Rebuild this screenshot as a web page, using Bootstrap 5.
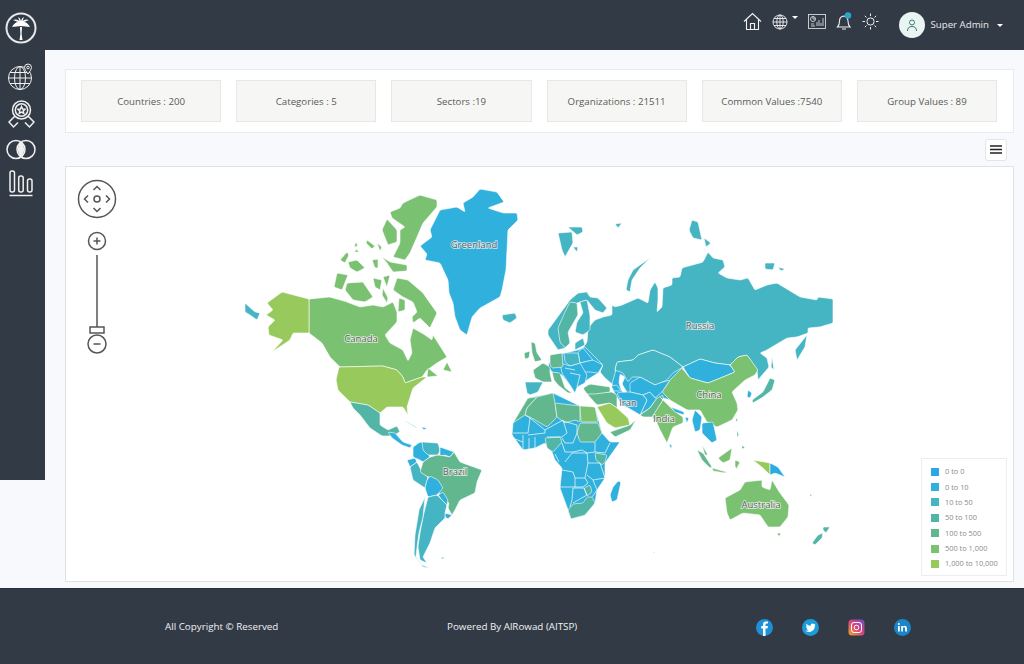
<!DOCTYPE html>
<html lang="en">
<head>
    <meta charset="UTF-8">
    <meta name="viewport" content="width=device-width, initial-scale=1.0">
    <title>Dashboard - World Map</title>
    <link href="https://cdn.jsdelivr.net/npm/bootstrap@5.3.2/dist/css/bootstrap.min.css" rel="stylesheet">
    <style>
        body {
            background: #f7f9fc;
            color: #555;
            font-family: "Open Sans", "Noto Sans", sans-serif;
            font-size: 9.7px;
            height: 664px;
            overflow: hidden;
        }
        .app-top {
            background: #323a46;
            height: 50px;
            padding: 0 21px 0 5px;
        }
        .app-logo { margin-top: 5px; }
        .top-icons { gap: 10px; margin-right: 12px; margin-bottom: 7px; }
        .user-name { color: #e8eaec; font-size: 9.7px; }
        .user-avatar {
            background: #e9f5f3;
            width: 26px;
            height: 26px;
            margin-right: 5px;
        }
        .caret-mini {
            border-left: 3px solid transparent;
            border-right: 3px solid transparent;
            border-top: 3px solid #fff;
            display: inline-block;
        }
        .app-middle { height: 538px; }
        .app-side {
            background: #323a46;
            width: 45px;
            height: 430px;
            padding: 13px 3px 0 0;
            gap: 10px;
        }
        .app-main {
            padding: 19px 10px 6px 20px;
            min-width: 0;
        }
        .stats-box {
            border: 1px solid #e9ecef;
            border-radius: 0;
            height: 64px;
            padding: 10px 16px 10px 15px;
            column-gap: 15px;
        }
        .stat-tile {
            background: #f6f7f5;
            border: 1px solid #e6e8e6;
            flex: 1 1 0;
            color: #5a5a5a;
            padding-top: 3px;
        }
        .map-tools { height: 33px; padding-right: 7px; }
        .menu-btn {
            background: #fff;
            border: 1px solid #e4e6ea;
            border-radius: 3px;
            width: 22px;
            height: 22px;
            padding: 0;
        }
        .map-box {
            border: 1px solid #dfe2e6;
            border-radius: 0;
            height: 416px;
            overflow: hidden;
        }
        .map-canvas { width: 100%; height: 100%; display: block; }
        .map-canvas polygon, .map-canvas path { stroke: #fff; stroke-width: .6; stroke-linejoin: round; }
        .map-canvas polyline { stroke: #fff; stroke-width: .7; fill: none; }
        .map-canvas text {
            fill: #5c5c5c;
            font-family: "Open Sans", sans-serif;
            font-size: 9.5px;
            text-anchor: middle;
            paint-order: stroke;
            stroke: rgba(255, 255, 255, .75);
            stroke-width: 1.6px;
        }
        .c0 { fill: #2aabe2; }
        .c1 { fill: #30b0dc; }
        .c2 { fill: #45b5c3; }
        .c3 { fill: #52b5a6; }
        .c4 { fill: #62b78f; }
        .c5 { fill: #7bc172; }
        .c6 { fill: #97c95c; }
        .cw { fill: #fff; }
        .map-nav { position: absolute; left: 11px; top: 12px; }
        .map-legend {
            position: absolute;
            right: 6px;
            bottom: 5px;
            width: 86px;
            height: 118px;
            background: #fff;
            border: 1px solid #eceef0;
            padding: 5px 0 0 9px;
            color: #8b8b8b;
            font-size: 7.4px;
        }
        .legend-row { height: 15.4px; gap: 6px; }
        .legend-dot { width: 8px; height: 8px; }
        .app-foot {
            background: #323a46;
            border-top: 1px solid #2a303a;
            height: 76px;
            padding-top: 2px;
            color: #f1f2f3;
            font-size: 9.8px;
        }
        .foot-copy { margin-left: 165px; width: 282px; }
        .foot-power { width: 309px; }
        .foot-social { gap: 29px; }
    </style>
</head>
<body>
    <nav class="app-top d-flex align-items-center justify-content-between">
        <!-- logo -->
        <svg class="app-logo" width="32" height="32" viewBox="0 0 32 32" fill="none">
            <circle cx="16" cy="16" r="14.500" stroke="#e8e8e8" stroke-width="2"/>
            <path d="M15 15 Q16 22 14.500 28 H17.500 Q16 22 17 15Z" fill="#fff"/>
            <path d="M16 14 L7 15 Q10 10 13 10 L8 8 Q12 6.500 14.500 9 L13 5 Q15.500 6 16 9 Q16.500 6 19 5 L17.500 9 Q20 6.500 24 8 L19 10 Q22 10 25 15Z" fill="#fff"/>
        </svg>
        <div class="d-flex align-items-center">
            <div class="top-icons d-flex align-items-center">
                <svg width="19" height="19" viewBox="0 0 19 19" fill="none" stroke="#f2f2f2" stroke-width="1.100">
                    <path d="M1 9.500 L9.500 1.500 L18 9.500 M3.500 7.500 V17.500 H15.500 V7.500 M7.500 17.500 V11.500 H11.500 V17.500"/>
                </svg>
                <span class="d-flex align-items-center gap-1">
                    <svg width="16" height="16" viewBox="0 0 16 16" fill="none" stroke="#f2f2f2" stroke-width=".9">
                        <circle cx="8" cy="8" r="7"/><ellipse cx="8" cy="8" rx="3.200" ry="7"/>
                        <path d="M1 8 H15 M2 4.500 H14 M2 11.500 H14 M8 1 V15"/>
                    </svg>
                    <span class="caret-mini mb-2"></span>
                </span>
                <svg width="18" height="15" viewBox="0 0 18 15" fill="none" stroke="#d8dadc" stroke-width=".9">
                    <rect x=".5" y=".5" width="17" height="14"/>
                    <circle cx="5" cy="5" r="2.500"/><path d="M5 2.500 V5 H7.500"/>
                    <path d="M9 12 V8 M11 12 V6 M13 12 V9 M15 12 V4 M3 12 H7 M3 10 H6"/>
                </svg>
                <svg width="16" height="19" viewBox="0 0 16 19" fill="none" stroke="#f2f2f2" stroke-width="1.100">
                    <path d="M1.500 15 Q3.500 13 3.500 9 Q3.500 4.500 8 4 Q11.500 4.500 12 9 Q12 13 14 15Z M6 17 H10"/>
                    <circle cx="12" cy="3.500" r="3.200" fill="#2aa5cf" stroke="none"/>
                </svg>
                <svg width="17" height="17" viewBox="0 0 17 17" fill="none" stroke="#f2f2f2" stroke-width="1">
                    <circle cx="8.500" cy="8.500" r="3.600"/>
                    <path d="M8.500 .5 V3 M8.500 14 V16.500 M.5 8.500 H3 M14 8.500 H16.500 M2.800 2.800 L4.500 4.500 M12.500 12.500 L14.200 14.200 M2.800 14.200 L4.500 12.500 M12.500 4.500 L14.200 2.800"/>
                </svg>
            </div>
            <div class="d-flex align-items-center">
                <span class="user-avatar rounded-circle d-flex align-items-center justify-content-center ms-2">
                    <svg width="12" height="13" viewBox="0 0 12 13" fill="none" stroke="#3d7a66" stroke-width="1">
                        <circle cx="6" cy="3.500" r="2.500"/><path d="M1.500 12 Q1.500 7.500 6 7.500 Q10.500 7.500 10.500 12"/>
                    </svg>
                </span>
                <span class="user-name">Super Admin</span>
                <span class="caret-mini ms-2"></span>
            </div>
        </div>
    </nav>

    <div class="app-middle d-flex">
        <aside class="app-side d-flex flex-column align-items-center flex-shrink-0">
            <svg width="27" height="27" viewBox="0 0 27 27" fill="none" stroke="#f0f0f0" stroke-width="1">
                <circle cx="12" cy="15" r="11.500"/><ellipse cx="12" cy="15" rx="5.500" ry="11.500"/>
                <path d="M.5 15 H23.500 M2 9.500 H22 M2 20.500 H22 M12 3.500 V26.500"/>
                <path d="M20 1 Q16.500 1 16.500 4.500 Q16.500 7 20 11 Q23.500 7 23.500 4.500 Q23.500 1 20 1Z" fill="#323a46"/>
                <circle cx="20" cy="4.500" r="1.300"/>
            </svg>
            <svg width="27" height="29" viewBox="0 0 27 29" fill="none" stroke="#f0f0f0" stroke-width="1.500">
                <circle cx="13.500" cy="10" r="9"/><circle cx="13.500" cy="10" r="6.200"/>
                <path d="M13.500 6.500 L14.600 9 L17 9.300 L15.200 11 L15.700 13.400 L13.500 12.200 L11.300 13.400 L11.800 11 L10 9.300 L12.400 9 Z"/>
                <path d="M7 16 L1 22 L5.500 27 L10 22.500 M20 16 L26 22 L21.500 27 L17 22.500"/>
            </svg>
            <svg width="30" height="21" viewBox="0 0 30 21" fill="none" stroke="#f0f0f0" stroke-width="1.500">
                <circle cx="10" cy="10.500" r="9"/><circle cx="20" cy="10.500" r="9"/>
                <path d="M15 3 Q20 10.500 15 18 Q10 10.500 15 3Z" fill="#f0f0f0"/>
            </svg>
            <svg width="24" height="27" viewBox="0 0 24 27" fill="none" stroke="#f0f0f0" stroke-width="1.500">
                <rect x="1" y="1" width="4.500" height="21" rx="2"/>
                <rect x="9.700" y="6" width="4.500" height="16" rx="2"/>
                <rect x="18.500" y="9" width="4.500" height="13" rx="2"/>
                <path d="M.5 25.500 H23.500"/>
            </svg>
        </aside>

        <main class="app-main flex-grow-1">
            <div class="stats-box card flex-row">
                <div class="stat-tile d-flex align-items-center justify-content-center">Countries : 200</div>
                <div class="stat-tile d-flex align-items-center justify-content-center">Categories : 5</div>
                <div class="stat-tile d-flex align-items-center justify-content-center">Sectors :19</div>
                <div class="stat-tile d-flex align-items-center justify-content-center">Organizations : 21511</div>
                <div class="stat-tile d-flex align-items-center justify-content-center">Common Values :7540</div>
                <div class="stat-tile d-flex align-items-center justify-content-center">Group Values : 89</div>
            </div>

            <div class="map-tools d-flex align-items-center justify-content-end">
                <button class="menu-btn btn d-flex align-items-center justify-content-center" type="button" aria-label="Menu">
                    <svg width="12" height="9" viewBox="0 0 12 9" stroke="#222" stroke-width="1.300"><path d="M0 1 H12 M0 4.500 H12 M0 8 H12"/></svg>
                </button>
            </div>

            <div class="map-box card position-relative">
                <svg class="map-canvas" id="worldMap" viewBox="66 167 947 414">
                    <!-- north america -->
                    <polygon class="c1" points="480,189 497,192 504,202 488,208 503,213 517,213 518,220 508,230 507,250 506,270 502,290 500,297 480,308 472,317 467,335 460,330 455,317 453,303 449,293 448,280 440,263 425,260 427,254 420,246 432,237 430,230 440,210 457,207 465,212 463,203 473,197"/>
                    <polygon class="c2" points="502,315 515,313 517,318 510,323 503,320"/>
                    <g class="c5">
                        <polygon points="403,203 420,195 437,200 437,207 423,223 417,237 410,253 405,260 393,257 400,243 400,230 405,227 392,218 390,212 400,208"/>
                        <polygon points="387,219 397,230 397,242 388,245 382,230"/>
                        <polygon points="340,260 347,252 349,255 345,263"/>
                        <polygon points="348,262 357,260 365,268 357,272 350,268"/>
                        <polygon points="372,260 378,259 378,268 375,268"/>
                        <polygon points="382,257 390,262 407,265 407,271 393,272 387,263"/>
                        <polygon points="367,240 375,246 372,249 366,243"/>
                        <polygon points="377,243 382,247 380,251"/>
                        <polygon points="356,242 358,246 354,247"/>
                        <polygon points="357,249 359,252 354,252"/>
                        <polygon points="337,273 348,275 342,290 334,287"/>
                        <polygon points="347,283 363,282 373,297 365,302 353,300 345,290"/>
                        <polygon points="373,278 382,280 380,290 375,287"/>
                        <polygon points="383,277 390,275 387,287"/>
                        <polygon points="397,278 408,280 423,293 437,313 430,328 420,318 413,323 412,317 417,312 413,302 403,297 393,290"/>
                        <polygon points="383,288 388,298 387,303 382,295"/>
                        <polygon points="399,298 405,300 405,310 398,312"/>
                        <polygon points="309,299 330,297 347,302 360,307 373,305 383,307 393,302 397,312 397,322 385,335 390,343 403,350 408,361 412,353 410,340 413,328 425,335 432,340 433,335 447,357 437,363 427,370 422,377 405,383 403,377 397,370 383,366 340,367 330,357 322,343 309,333"/>
                        <polygon points="447,362 452,372 443,370"/>
                        <polygon points="428,368 438,376 427,377"/>
                    </g>
                    <g class="c6">
                        <polygon points="282,292 309,299 309,333 293,333 290,340 272,352 283,340 269,335 268,327 275,320 266,315 273,310 267,303"/>
                        <polygon points="339,367 383,366 397,370 403,377 405,383 422,377 427,377 413,388 407,407 408,415 403,407 387,407 380,413 368,405 350,402 338,390 336,380"/>
                    </g>
                    <polygon class="c2" points="245,303 255,312 260,313 257,320 250,315 245,312"/>
                    <polygon class="c3" points="350,402 368,405 380,413 380,425 388,430 397,426 400,432 392,436 382,436 370,428 360,415 353,408"/>
                    <polygon class="c1" points="388,432 395,433 403,442 412,445 410,448 402,445 392,438"/>
                    <polygon class="c1" points="405,421 415,426 417,428 408,423"/>
                    <polygon class="c1" points="421,427 427,428 424,430"/>

                    <!-- south america -->
                    <polygon class="c1" points="420,442 425,443 423,450 428,453 430,457 423,462 420,460 413,457 413,447"/>
                    <polygon class="c2" points="422,442 438,443 440,450 438,455 428,455 423,450"/>
                    <polygon class="c1" points="440,447 454,452 450,457 445,455 440,456"/>
                    <polygon class="c1" points="407,460 415,458 417,462 410,467"/>
                    <polygon class="c2" points="410,467 417,462 422,472 428,477 425,488 413,480"/>
                    <polygon class="c4" points="438,455 445,456 450,457 454,452 460,462 482,470 477,482 475,493 460,500 455,510 452,515 448,508 449,503 443,497 438,492 440,487 432,478 428,477 420,472 423,462 430,457"/>
                    <polygon class="c1" points="425,488 427,480 430,476 438,480 443,488 437,495 428,497"/>
                    <polygon class="c1" points="438,495 443,492 448,500 447,505 442,500"/>
                    <polygon class="c1" points="445,513 452,515 448,519 445,517"/>
                    <polygon class="c2" points="428,497 437,495 442,500 447,505 445,513 445,518 435,528 432,537 430,543 423,557 427,563 420,560 418,547 420,533 423,517"/>
                    <polygon class="c2" points="425,497 423,517 419,533 417,547 416,557 422,565 430,568 423,567 414,555 415,535 419,510"/>
                    <polygon class="c1" points="440,558 444,557 444,559"/>

                    <!-- africa -->
                    <polygon class="c1" points="513,423 528,398 553,393 580,406 595,407 602,433 610,442 620,442 605,463 605,478 597,490 595,503 585,515 571,519 568,510 560,488 562,468 555,460 552,452 545,443 535,448 523,450 512,435"/>
                    <polygon class="c4" points="513,423 528,398 537,397 527,408 525,415"/>
                    <polygon class="c4" points="527,408 537,397 553,393 555,403 557,417 547,427 530,417 525,415"/>
                    <polygon class="c4" points="555,403 580,406 580,422 575,420 565,423 557,417"/>
                    <polygon class="c5" points="580,406 595,407 598,422 581,422"/>
                    <polygon class="c4" points="580,423 598,423 602,433 595,442 580,442 577,433"/>
                    <polygon class="c3" points="545,438 560,437 562,442 553,452 547,448"/>
                    <polygon class="c3" points="595,453 607,455 605,462 602,465 596,460"/>
                    <polygon class="c3" points="584,488 590,485 592,492 587,496"/>
                    <polygon class="c3" points="568,510 573,504 583,503 587,497 592,497 595,503 585,515 571,519"/>
                    <polygon class="c1" points="618,481 621,482 617,500 612,502 610,495 613,487"/>
                    <polyline points="525,415 530,418 528,433 513,433"/>
                    <polyline points="530,418 545,430 545,433 528,435"/>
                    <polyline points="545,430 563,420 567,433 562,437 547,437"/>
                    <polyline points="563,421 577,425 577,433 573,443 565,443 562,438"/>
                    <polyline points="562,443 565,452 573,452 582,450 587,453 595,452 595,442"/>
                    <polyline points="595,452 605,453 610,443"/>
                    <polyline points="565,462 572,453 587,453 588,463 585,478 575,478 573,472 562,470"/>
                    <polyline points="575,478 575,487 559,487"/>
                    <polyline points="588,463 600,463 605,478 593,480 587,475"/>
                    <polyline points="585,478 588,483 583,487 575,487"/>
                    <polyline points="573,488 572,500 570,507"/>
                    <polyline points="573,488 584,488 587,495 573,503"/>
                    <polyline points="593,480 597,490 592,497"/>
                    <polyline points="523,435 523,450"/>
                    <polyline points="535,437 535,448"/>
                    <polyline points="515,439 523,442"/>
                    <polyline points="529,438 529,449"/>
                    <polyline points="555,454 559,462"/>

                    <!-- eurasia -->
                    <polygon class="c2" points="595,320 603,317 612,315 612,305 615,307 622,305 638,298 648,303 650,290 655,282 658,288 658,300 657,312 662,307 663,288 672,285 672,278 680,277 682,268 703,262 708,252 713,258 723,260 725,267 718,273 727,278 740,280 748,278 755,290 767,285 777,283 800,297 817,300 818,297 833,299 833,323 820,327 808,328 808,333 797,337 787,338 767,350 760,353 767,358 769,367 758,380 757,370 747,355 738,357 730,365 715,363 700,359 683,367 670,357 653,350 638,355 633,360 617,362 615,370 618,378 612,384 605,378 600,372 603,365 593,360 583,348 587,342 588,328"/>
                    <polygon class="c2" points="795,350 807,335 805,347 797,360"/>
                    <polygon class="c2" points="772,357 774,370 771,367"/>
                    <polygon class="c2" points="650,258 633,270 628,280 626,290 630,292 632,280 640,268"/>
                    <polygon class="c2" points="692,220 698,222 702,240 693,238 689,230"/>
                    <polygon class="c2" points="704,238 711,243 706,247"/>
                    <polygon class="c2" points="558,233 572,232 573,243 565,257 562,250"/>
                    <polygon class="c2" points="568,227 582,227 583,232 577,235"/>
                    <polygon class="c2" points="573,247 578,247 577,252"/>
                    <polygon class="c2" points="615,224 622,223 618,228"/>
                    <polygon class="c2" points="765,263 775,263 773,270 765,269"/>
                    <polygon class="c2" points="778,267 785,269 781,271"/>
                    <!-- fill under the central asia countries, caspian is cut back out below -->
                    <polygon class="c1" points="612,384 618,362 683,367 670,400 660,397 642,415 622,405 614,392"/>
                    <polygon class="c2" points="617,362 633,360 638,355 653,350 670,357 683,367 673,373 667,380 660,383 655,385 640,377 632,377 628,382 623,373 615,370"/>
                    <polygon class="c1" points="683,367 700,359 715,363 730,365 735,372 723,377 708,383 690,378"/>
                    <polygon class="c5" points="682,368 690,378 708,383 723,377 735,372 730,365 738,357 747,355 758,370 755,375 745,380 732,392 737,403 738,410 732,420 717,427 707,422 700,410 687,410 670,400 662,392 670,380"/>
                    <polygon class="c1" points="630,383 640,377 655,385 660,383 670,380 662,392 655,398 650,392 643,395 630,392"/>
                    <polygon class="c1" points="643,395 650,392 655,398 657,398 650,408 642,413 640,415 647,400"/>
                    <polygon class="c4" points="640,415 650,408 657,398 663,395 663,400 653,417 643,417"/>
                    <polygon class="c5" points="660,397 670,407 677,413 683,417 683,423 673,427 667,443 660,430 657,423 652,417 663,400"/>
                    <polygon class="c1" points="671,407 684,412 684,415 675,412"/>
                    <polygon class="c1" points="685,417 689,418 687,423"/>
                    <polygon class="c1" points="617,393 622,392 630,392 643,395 647,400 640,415 632,410 623,405"/>
                    <polygon class="c4" points="587,394 597,393 612,392 617,395 617,408 610,403 597,405"/>
                    <polygon class="c4" points="583,388 590,384 610,387 610,392 595,394 587,394"/>
                    <polygon class="c1" points="611,386 617,385 621,391 614,391"/>
                    <polygon class="cw" points="620,374 625,377 622,384 627,392 622,392 619,383"/>
                    <polygon class="c6" points="597,407 610,403 617,408 628,418 630,425 615,428 607,423"/>
                    <polygon class="c4" points="610,432 630,425 636,420 630,430 615,437"/>
                    <polygon class="c1" points="692,420 695,410 702,417 700,430 695,432"/>
                    <polygon class="c1" points="702,423 713,422 717,440 712,443 702,433"/>
                    <polygon class="c1" points="748,390 752,393 750,398 747,397"/>
                    <polygon class="c3" points="770,378 775,380 772,390 763,397 753,403 752,400 763,392"/>
                    <polygon class="c1" points="669,444 672,445 671,449"/>
                    <polygon class="c3" points="737,430 739,435 737,437"/>
                    <polygon class="c3" points="742,445 745,448 742,449"/>
                    <polygon class="c3" points="736,418 738,420 736,422"/>

                    <!-- europe -->
                    <polygon class="c2" points="548,330 565,307 570,300 578,293 587,292 590,297 598,298 607,308 603,313 595,310 587,300 580,302 577,303 570,323 565,348 558,350 548,335"/>
                    <polygon class="c3" points="570,302 577,303 578,315 568,332 570,343 565,348 560,342 558,328 565,312"/>
                    <polygon class="c2" points="580,302 587,300 590,315 590,330 583,335 575,332 577,322 583,313"/>
                    <polygon class="c2" points="575,343 583,338 585,345 575,350"/>
                    <polygon class="c4" points="531,342 535,343 537,353 542,360 535,362 532,353"/>
                    <polygon class="c4" points="524,353 530,351 529,358 525,359"/>
                    <polygon class="c1" points="548,366 552,356 578,350 585,347 603,365 598,373 587,380 577,387 570,385 562,375 552,372"/>
                    <polygon class="c1" points="578,352 583,348 593,360 580,363"/>
                    <polygon class="c1" points="580,363 593,360 603,365 598,373 590,372 582,372"/>
                    <polygon class="c1" points="560,363 570,366 580,363 587,375 585,383 577,387 575,393 570,385 562,373"/>
                    <polygon class="c2" points="564,353 578,353 580,363 570,366 565,362"/>
                    <polygon class="c4" points="533,370 543,363 550,367 550,373 552,382 543,382 535,378"/>
                    <polygon class="c4" points="550,355 562,353 563,367 552,368 550,365"/>
                    <polygon class="c2" points="525,382 543,382 538,392 530,395 527,393"/>
                    <polygon class="c4" points="552,372 560,373 565,388 572,393 568,393 558,385 554,380"/>
                    <polyline points="570,373 580,375 577,387"/>
                    <polyline points="565,368 575,370"/>

                    <!-- se asia / oceania -->
                    <polygon class="c4" points="697,450 703,453 712,467 710,468 702,460"/>
                    <polygon class="c4" points="702,445 708,455 705,455"/>
                    <polygon class="c5" points="712,468 727,472 725,473 713,471"/>
                    <polygon class="c5" points="718,458 732,448 730,460 723,463"/>
                    <polygon class="c5" points="735,460 740,462 737,468 739,470 735,467"/>
                    <polygon class="c6" points="753,460 770,463 770,475 763,468"/>
                    <polygon class="c0" points="770,463 778,467 785,477 775,473 770,475"/>
                    <polygon class="c5" points="725,498 740,490 745,482 762,480 762,487 770,490 772,480 780,493 789,505 788,517 780,527 768,527 760,515 743,513 730,520 727,513"/>
                    <polygon class="c5" points="777,533 781,533 779,537"/>
                    <polygon class="c3" points="823,527 830,527 826,533 823,530"/>
                    <polygon class="c3" points="823,533 822,538 815,545 812,543 818,535"/>
                    <polygon class="c3" points="810,494 812,495 810,497"/>
                    <polygon class="c1" points="653,552 655,552 654,553"/>

                    <text x="474" y="248">Greenland</text>
                    <text x="361" y="342">Canada</text>
                    <text x="700" y="329">Russia</text>
                    <text x="709" y="398">China</text>
                    <text x="628" y="406">Iran</text>
                    <text x="664" y="422">India</text>
                    <text x="455" y="475">Brazil</text>
                    <text x="761" y="508">Australia</text>
                </svg>

                <svg class="map-nav" width="42" height="178" viewBox="0 0 42 178" fill="none" stroke="#555" stroke-width="1.500">
                    <circle cx="20" cy="20" r="18.500"/>
                    <circle cx="20" cy="20" r="3"/>
                    <path d="M16.500 11 L20 7.500 L23.500 11 M16.500 29 L20 32.500 L23.500 29 M11 16.500 L7.500 20 L11 23.500 M29 16.500 L32.500 20 L29 23.500"/>
                    <circle cx="20" cy="62" r="8.500"/>
                    <path d="M16.500 62 H23.500 M20 58.500 V65.500"/>
                    <path d="M20 76 V148"/>
                    <rect x="13" y="148" width="14" height="6"/>
                    <circle cx="20" cy="165" r="9"/>
                    <path d="M16.500 165 H23.500"/>
                </svg>

                <div class="map-legend">
                    <div class="legend-row d-flex align-items-center"><span class="legend-dot" style="background:#2aa7e8"></span>0 to 0</div>
                    <div class="legend-row d-flex align-items-center"><span class="legend-dot" style="background:#30b0dc"></span>0 to 10</div>
                    <div class="legend-row d-flex align-items-center"><span class="legend-dot" style="background:#45b5c3"></span>10 to 50</div>
                    <div class="legend-row d-flex align-items-center"><span class="legend-dot" style="background:#52b5a6"></span>50 to 100</div>
                    <div class="legend-row d-flex align-items-center"><span class="legend-dot" style="background:#62b78f"></span>100 to 500</div>
                    <div class="legend-row d-flex align-items-center"><span class="legend-dot" style="background:#7bc172"></span>500 to 1,000</div>
                    <div class="legend-row d-flex align-items-center"><span class="legend-dot" style="background:#97c95c"></span>1,000 to 10,000</div>
                </div>
            </div>
        </main>
    </div>

    <footer class="app-foot d-flex align-items-center">
        <div class="foot-copy">All Copyright © Reserved</div>
        <div class="foot-power">Powered By AlRowad (AITSP)</div>
        <div class="foot-social d-flex align-items-center">
            <svg width="17" height="17" viewBox="0 0 17 17">
                <circle cx="8.500" cy="8.500" r="8.500" fill="#1e90d8"/>
                <path d="M9.500 17 V9.500 H11.500 L12 7 H9.500 V5.500 Q9.500 4.500 10.500 4.500 H12 V2.500 H10 Q7 2.500 7 5.500 V7 H5.200 V9.500 H7 V17Z" fill="#fff"/>
            </svg>
            <svg width="17" height="17" viewBox="0 0 17 17">
                <circle cx="8.500" cy="8.500" r="8.500" fill="#1c9cd8"/>
                <path d="M3.500 11.800 Q6 12 7 11 Q5 11 4.500 9.500 L5.500 9.400 Q4 9 4 7.200 L5 7.500 Q3.700 6.200 4.400 4.800 Q6 6.800 8.500 7 Q8.300 4.800 10.300 4.500 Q11.300 4.400 12 5.200 L13.300 4.800 L12.600 6 L13.600 5.800 L12.800 6.800 Q13 11.800 8 13 Q5.500 13.300 3.500 11.800Z" fill="#fff"/>
            </svg>
            <svg width="17" height="17" viewBox="0 0 17 17">
                <defs>
                    <linearGradient id="instaGrad" x1="0" y1="1" x2="1" y2="0">
                        <stop offset="0" stop-color="#f5a623"/>
                        <stop offset=".5" stop-color="#d9437f"/>
                        <stop offset="1" stop-color="#6a4fc9"/>
                    </linearGradient>
                </defs>
                <rect width="16" height="16" x=".5" y=".5" rx="3.500" fill="url(#instaGrad)"/>
                <rect x="3.500" y="3.500" width="10" height="10" rx="2.500" fill="none" stroke="#fff" stroke-width="1"/>
                <circle cx="8.500" cy="8.500" r="2.300" fill="none" stroke="#fff" stroke-width="1"/>
            </svg>
            <svg width="17" height="17" viewBox="0 0 17 17">
                <circle cx="8.500" cy="8.500" r="8.500" fill="#1a86c8"/>
                <path d="M4 7 H5.800 V12.500 H4Z M12.900 12.500 H11.100 V9.500 Q11.100 8.200 10 8.200 Q9 8.200 9 9.500 V12.500 H7.200 V7 H9 V7.800 Q9.600 6.800 10.800 6.800 Q12.900 6.800 12.900 9.300Z" fill="#fff"/>
                <circle cx="4.900" cy="5" r="1" fill="#fff"/>
            </svg>
        </div>
    </footer>

    <script>
        // round off the corners of the map polygons so coasts look less angular
        document.querySelectorAll('#worldMap polygon').forEach(poly => {
            const pts = poly.getAttribute('points').trim().split(/\s+/).map(p => p.split(',').map(Number));
            let d = '';
            pts.forEach((p, i) => {
                const prev = pts[(i + pts.length - 1) % pts.length];
                const next = pts[(i + 1) % pts.length];
                const cut = (a, b) => {
                    const len = Math.hypot(b[0] - a[0], b[1] - a[1]) || 1;
                    const r = Math.min(1.3, len * 0.35) / len;
                    return [a[0] + (b[0] - a[0]) * r, a[1] + (b[1] - a[1]) * r];
                };
                const a = cut(p, prev);
                const b = cut(p, next);
                d += (i ? 'L' : 'M') + a[0].toFixed(1) + ' ' + a[1].toFixed(1) + 'Q' + p[0] + ' ' + p[1] + ' ' + b[0].toFixed(1) + ' ' + b[1].toFixed(1);
            });
            const path = document.createElementNS('http://www.w3.org/2000/svg', 'path');
            path.setAttribute('d', d + 'Z');
            if (poly.getAttribute('class')) path.setAttribute('class', poly.getAttribute('class'));
            poly.replaceWith(path);
        });
    </script>
    <script src="https://cdn.jsdelivr.net/npm/bootstrap@5.3.2/dist/js/bootstrap.bundle.min.js"></script>
</body>
</html>
